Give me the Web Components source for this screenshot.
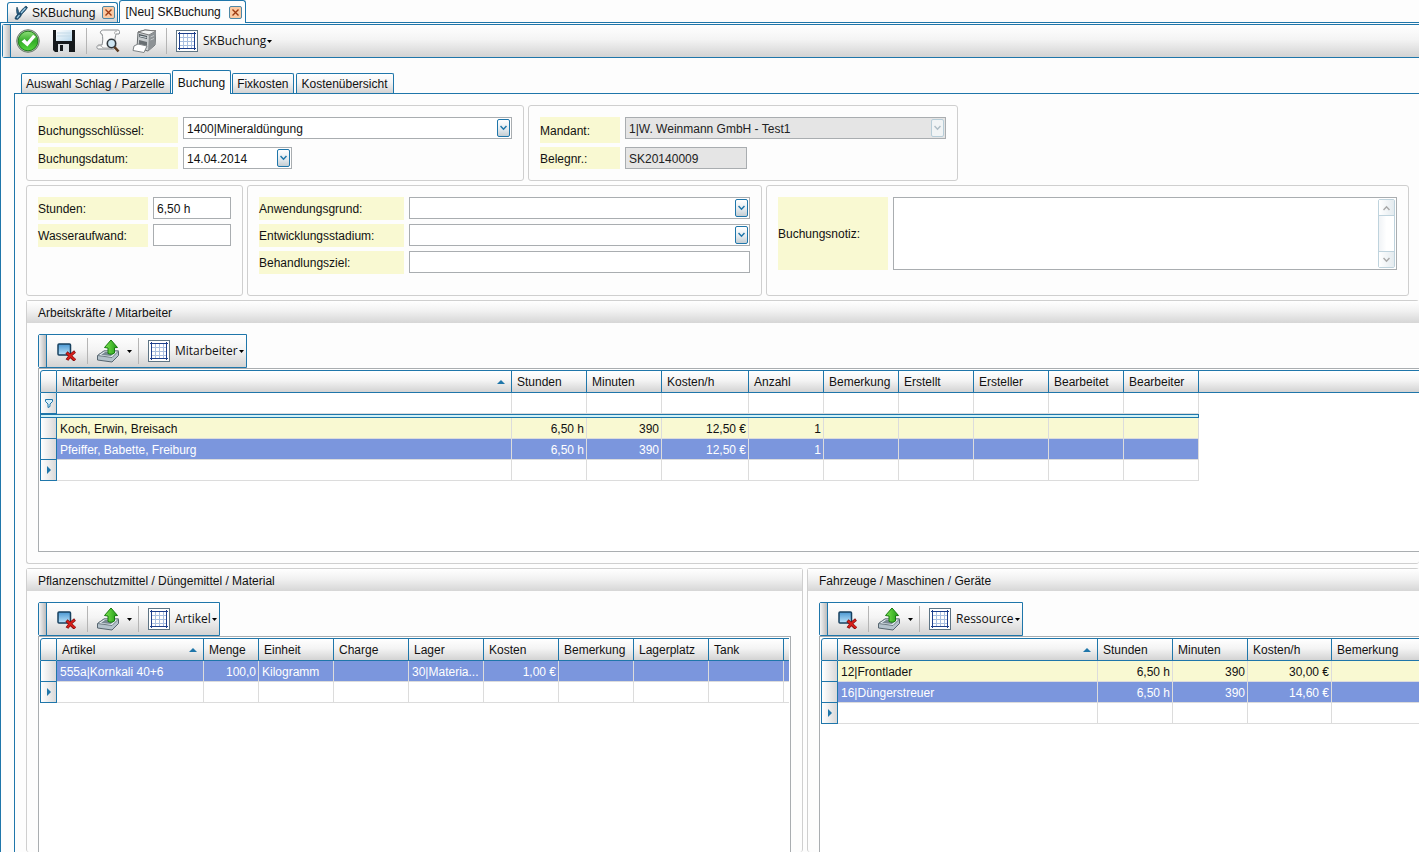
<!DOCTYPE html>
<html lang="de">
<head>
<meta charset="utf-8">
<title>SKBuchung</title>
<style>
:root {
  --line: #1f76aa;
  --soft: #cfcfcf;
  --frame: #a9adb0;
  --label: #f9f9d2;
  --select: #7b96dd;
  --page: #fdfdfd;
  --shade: linear-gradient(#ffffff, #f4f4f4 45%, #d3d3d3);
}
html { height: 100%; overflow: hidden; }
body {
  margin: 0; height: 100%;
  background: var(--page); color: #111;
  font: 12px/16px "Liberation Sans", Arial, sans-serif;
}
</style>
</head>
<body>
<booking-app></booking-app>
<script>
const ICONS = {
  ok: `<svg width="24" height="24" viewBox="0 0 24 24"><defs><linearGradient id="a" x2="0" y2="1"><stop stop-color="#8fe07a"/><stop offset=".5" stop-color="#33ab28"/><stop offset="1" stop-color="#55d83c"/></linearGradient></defs><circle cx="12" cy="12" r="11.3" fill="#a9b8a9" stroke="#6f7f70"/><circle cx="12" cy="12" r="9.8" fill="url(#a)" stroke="#23801d"/><path d="M5.500 12.500l3-2.600 2.600 2.900 6-7 2.600 2-8.300 9.700z" fill="#fff"/></svg>`,
  save: `<svg width="24" height="24" viewBox="0 0 24 24"><defs><linearGradient id="a" x2="1" y2="1"><stop stop-color="#fff"/><stop offset="1" stop-color="#b9d8ec"/></linearGradient></defs><path d="M1 1h22v22H3l-2-2z" fill="#15191c"/><path d="M4 1h16v11H4z" fill="url(#a)"/><path d="M5 4h14M5 7h14" stroke="#c5dbe8"/><path d="M6 15h11v8H6z" fill="#d9dee1"/><path d="M8 16h3v6H8z" fill="#15191c"/></svg>`,
  preview: `<svg width="24" height="24" viewBox="0 0 24 24"><path d="M5 2c1-1 2-1 3-1h14c2 0 2 3 1 4h-3c-1 4-2 8 0 12l-2 3H2c-2-1-1-4 1-4h3C7 12 7 8 6 5 4 5 4 3 5 2z" fill="#fafafa" stroke="#888c8f"/><path d="M19 5c-1-2 0-3 2-3M2 17c2-1 4 0 5 2h7" fill="none" stroke="#aaa"/><circle cx="15.500" cy="14.500" r="4.200" fill="#cfe6f3" stroke="#30373c" stroke-width="1.600"/><path d="M18.500 18l4 4.500" stroke="#5a3a20" stroke-width="2.600"/></svg>`,
  print: `<svg width="24" height="24" viewBox="0 0 24 24"><path d="M6 3l7-2 11 1-1 14-7 6-11-3z" fill="#c9cdcf" stroke="#666b6e"/><path d="M6 3l7-2 11 1-7 4z" fill="#f3f4f4" stroke="#777"/><path d="M17 6l7-4-1 14-7 6z" fill="#8d9295"/><path d="M7 5l8 2v3L7 8z" fill="#4b5358"/><path d="M7.500 7l7 1.500" stroke="#dde6ea"/><path d="M7 11l8 2v4l-8-2z" fill="#696f73"/><path d="M2 17l4-2 9 2-3 6.500-11-2z" fill="#fff" stroke="#7e8386"/><path d="M18.500 8l3.500-1.500M18.500 11l3.500-1.500" stroke="#c4c8ca"/></svg>`,
  grid: `<svg width="22" height="22" viewBox="0 0 22 22" shape-rendering="crispEdges"><path d="M.5.500h21v21H.5z" fill="#fff" stroke="#5d7484"/><path d="M7.500 3v16M11.500 3v16M15.500 3v16M3 7.500h16M3 11.500h16M3 15.500h16" stroke="#a9bfe0"/><path d="M3.500 2v18M18.500 2v18M2 3.500h18M2 18.500h18" stroke="#1d3f8c"/></svg>`,
  remove: `<svg width="20" height="20" viewBox="0 0 20 20"><defs><linearGradient id="a" x2="0" y2="1"><stop stop-color="#4a97d2"/><stop offset="1" stop-color="#bde4fa"/></linearGradient></defs><rect x="1" y="3" width="12.500" height="11" rx="1" fill="url(#a)" stroke="#17405f" stroke-width="1.500"/><path d="M9.500 11.500l8.500 8M18 10.500c-3 2-6 5-8 8.500" stroke="#7d0d0d" stroke-width="3.200"/><path d="M10 12l8 7M17.500 11c-3 2-5.500 4.500-7 7.500" stroke="#d8201b" stroke-width="2"/></svg>`,
  export: `<svg width="22" height="24" viewBox="0 0 22 24"><defs><linearGradient id="a" x2="1" y2="0"><stop stop-color="#7fe84f"/><stop offset="1" stop-color="#1f9a16"/></linearGradient></defs><path d="M.5 16.500L7 12h14.500v4.500l-6.500 6.500L.5 21z" fill="#b5c3cc" stroke="#56656f"/><path d="M.5 16.500L7 12h14.500L15 18.500z" fill="#e9f0f4" stroke="#6c7a83"/><path d="M4 16l4-3h10l-4 4z" fill="#788892"/><path d="M14 1L20.500 8.500l-3 .2v5.300c-2 1.500-4 1.500-6.500.5V9L7.500 8.500z" fill="url(#a)" stroke="#16780f"/></svg>`,
  pliers: `<svg width="16" height="16" viewBox="0 0 16 16"><path d="M4 2c1 2 1.500 4 2 6l1.500 1.500L5 11C3.500 8 3 5 4 2z" fill="#2a6288" stroke="#143a54" stroke-width=".6"/><path d="M13 1l1.500 1.500C13 5 11 7 9 9c-1 2-2 4-4.500 5.500L2 14c0-2 1.500-4 4-5.500C8 6 10 3 13 1z" fill="#1d5074" stroke="#143a54" stroke-width=".6"/><path d="M12.500 3L8 8M4 13l2.500-3" stroke="#9fcbe2" stroke-width="1.200"/></svg>`,
  caret: `<svg width="5" height="3" viewBox="0 0 5 3"><path d="M0 0h5L2.500 3z" fill="#000"/></svg>`,
  down: `<svg width="7" height="6" viewBox="0 0 7 6"><path d="M.5 1l3 3.200 3-3.200" fill="none" stroke="currentColor" stroke-width="1.500"/></svg>`,
  up: `<svg width="7" height="6" viewBox="0 0 7 6"><path d="M.5 5l3-3.200 3 3.200" fill="none" stroke="currentColor" stroke-width="1.500"/></svg>`,
  sort: `<svg width="8" height="4" viewBox="0 0 8 4"><path d="M0 4h8L4 0z" fill="#1f76aa"/></svg>`,
  play: `<svg width="4" height="8" viewBox="0 0 4 8"><path d="M0 0v8l4-4z" fill="#1f76aa"/></svg>`,
  filter: `<svg width="8" height="9" viewBox="0 0 8 9"><path d="M.5.500h7v2L5 5v2.500L3 8.500V5L.5 2.500z" fill="#d7effa" stroke="#1f76aa"/></svg>`,
  close: `<svg width="7" height="7" viewBox="0 0 7 7"><path d="M.5.500l6 6M6.500.500l-6 6" stroke="#9c3a12" stroke-width="1.400"/></svg>`
};

const RESET = `
  *, *::before { box-sizing: border-box; }
  button, input, select, textarea { font: inherit; color: inherit; margin: 0; padding: 0; border: 0; background: none; border-radius: 0; outline: 0; }
  svg { display: block; flex: none; }`;

class Base extends HTMLElement {
  constructor() { super(); this.attachShadow({ mode: "open" }); }
  connectedCallback() { this.shadowRoot.innerHTML = `<style>${RESET}${this.css()}</style>${this.html()}`; }
  at(name, fallback = "") { return this.getAttribute(name) ?? fallback; }
}

/* Tab of an open document, with its own close button */
customElements.define("doc-tab", class extends Base {
  css() { return `
    :host { display: flex; align-items: center; height: 20px; padding: 0 2px 0 5px; gap: 7px;
      border: 1px solid var(--line); border-bottom: 0; border-radius: 3px 3px 0 0; background: var(--shade); }
    :host([active]) { height: 23px; padding: 0 3px 0 5px; gap: 8px; background: var(--page); }
    .name { display: flex; align-items: center; gap: 3px; white-space: nowrap; }
    .close { width: 13px; height: 13px; display: grid; place-items: center; border: 1px solid #4e87a6; border-radius: 2px; background: #fbc9a2; }`; }
  html() { return `<button class="name">${this.hasAttribute("icon") ? ICONS[this.at("icon")] : ""}<slot></slot></button>
    <button class="close" aria-label="Schließen">${ICONS.close}</button>`; }
});

customElements.define("tool-bar", class extends Base {
  css() { return `
    :host { display: flex; height: 34px; border: 1px solid var(--line); border-radius: 2px 0 0 2px; background: var(--shade); }
    :host([wide]) { border-right: 0; border-radius: 3px 0 0 3px; }
    .grip { width: 8px; border-right: 1px solid var(--line); background: linear-gradient(90deg, #f4f4f4, #bcbcbc); }
    .items { display: flex; align-items: center; padding: 0 2px 0 10px; }
    :host([wide]) .items { padding-left: 5px; }`; }
  html() { return `<div class="grip"></div><div class="items"><slot></slot></div>`; }
});

customElements.define("tool-button", class extends Base {
  css() { return `:host { display: block; }
    button { display: flex; align-items: center; gap: 8px; }
    button.text { gap: 1px; font: 12px/16px "Open Sans", "Noto Sans", sans-serif; white-space: nowrap; }
    .label { padding-left: 4px; }`; }
  html() {
    const label = this.at("label");
    return `<button class="${label ? "text" : ""}" aria-label="${this.at("hint", label)}">${ICONS[this.at("icon")]}${label ? `<span class="label">${label}</span>` : ""}${this.hasAttribute("menu") ? ICONS.caret : ""}</button>`;
  }
});

customElements.define("tool-separator", class extends Base {
  css() { return `:host { display: block; width: 1px; height: 26px; margin: 0 9px 0 10px; background: #b5b5b5; }
    :host([tight]) { margin-left: 6px; }`; }
  html() { return ""; }
});

customElements.define("page-tab", class extends Base {
  css() { return `
    :host { display: block; height: 20px; padding: 0 5px 0 4px; border: 1px solid var(--line); border-bottom: 0; border-radius: 2px 2px 0 0; background: var(--shade); }
    :host([active]) { height: 24px; margin: 0 0 -1px; padding: 0 5px; background: var(--page); }
    button { height: 100%; white-space: nowrap; display: flex; align-items: center; padding-top: 1px; }`; }
  html() { return `<button><slot></slot></button>`; }
});

customElements.define("group-panel", class extends Base {
  css() { return `
    :host { display: flex; flex-direction: column; border: 1px solid var(--soft); border-radius: 3px; min-width: 0; }
    :host([open]) { border-right: 0; }
    :host([foot]) { border-bottom: 0; }
    h2 { margin: 0; height: 22px; padding-left: 11px; font: inherit; line-height: 24px; background: linear-gradient(#fff, #f1f1f1 45%, #d6d6d6); }
    .body { flex: 1; display: flex; flex-direction: column; padding: 11px; min-height: 0; }
    :host([open]) .body { padding-right: 0; }
    :host([foot]) .body { padding-bottom: 0; }`; }
  html() { return `${this.hasAttribute("heading") ? `<h2>${this.at("heading")}</h2>` : ""}<div class="body"><slot></slot></div>`; }
});

/* Label and control: kind is text, select, date or memo */
customElements.define("form-field", class extends Base {
  css() { return `
    :host { display: grid; grid-template-columns: var(--label-width) 1fr; column-gap: 5px; align-items: start; margin-bottom: 4px; }
    :host(:last-child) { margin-bottom: 0; }
    :host([short]) { grid-template-columns: var(--label-width) var(--short-width); }
    label { min-height: var(--label-height, 23px); display: flex; align-items: center; padding-top: 1px; background: var(--label); }
    .box { display: flex; height: 22px; border: 1px solid var(--frame); background: #fff; position: relative; }
    :host([off]) .box { background: #e5e5e5; color: #222; }
    input, select { flex: 1; min-width: 0; width: 0; padding: 1px 3px 0; }
    select { appearance: none; opacity: 1; color: inherit; }
    input:disabled { color: inherit; }
    .drop { position: absolute; right: 1px; top: 1px; width: 13px; height: 18px; display: grid; place-items: center;
      border: 1px solid var(--line); border-radius: 2px; color: var(--line); background: linear-gradient(#fff, #e6ecf0 55%, #c3cdd3); pointer-events: none; }
    :host([off]) .drop { color: #b0bec6; border-color: #b7cdd8; background: #f1f4f5; }
    .box.memo { height: 73px; padding: 1px; }
    textarea { flex: 1; resize: none; min-width: 0; }
    .scroll { width: 17px; display: flex; flex-direction: column; justify-content: space-between; border: 1px solid #bfd3dd; border-radius: 2px; color: #a9a9a9; background: linear-gradient(90deg, #f0f3f6, #fff 50%); }
    .scroll button { height: 16px; display: grid; place-items: center; border-bottom: 1px solid #bfd3dd; background: linear-gradient(90deg, #fff, #e4ebef); }
    .scroll button:last-child { border-top: 1px solid #bfd3dd; border-bottom: 0; }`; }
  html() {
    const kind = this.at("kind", "text"), value = this.at("value"), off = this.hasAttribute("off") ? "disabled" : "";
    const drop = `<span class="drop">${ICONS.down}</span>`;
    const control = {
      text: `<input id="c" value="${value}" ${off}>`,
      date: `<input id="c" value="${value}">${drop}`,
      select: `<select id="c" ${off}><option>${value}</option></select>${drop}`,
      memo: `<textarea id="c"></textarea><div class="scroll"><button aria-label="Nach oben">${ICONS.up}</button><button aria-label="Nach unten">${ICONS.down}</button></div>`
    }[kind];
    return `<label for="c">${this.at("label")}</label><div class="box ${kind}">${control}</div>`;
  }
});

const GRIDS = {
  staff: {
    filter: true,
    cols: [["Mitarbeiter", 455], ["Stunden", 75, 1], ["Minuten", 75, 1], ["Kosten/h", 87, 1], ["Anzahl", 75, 1], ["Bemerkung", 75], ["Erstellt", 75], ["Ersteller", 75], ["Bearbeitet", 75], ["Bearbeiter", 75]],
    rows: [["Koch, Erwin, Breisach", "6,50 h", "390", "12,50 €", "1"], ["Pfeiffer, Babette, Freiburg", "6,50 h", "390", "12,50 €", "1"]],
    rest: true
  },
  material: {
    cols: [["Artikel", 147], ["Menge", 55, 1], ["Einheit", 75], ["Charge", 75], ["Lager", 75], ["Kosten", 75, 1], ["Bemerkung", 75], ["Lagerplatz", 75], ["Tank", 75], ["", 75]],
    rows: [["555a|Kornkali 40+6", "100,0", "Kilogramm", "", "30|Materia...", "1,00 €"]]
  },
  machines: {
    cols: [["Ressource", 260], ["Stunden", 75, 1], ["Minuten", 75, 1], ["Kosten/h", 84, 1], ["Bemerkung", 150]],
    rows: [["12|Frontlader", "6,50 h", "390", "30,00 €"], ["16|Düngerstreuer", "6,50 h", "390", "14,60 €"]]
  }
};

customElements.define("data-grid", class extends Base {
  css() { return `
    :host { display: block; flex: 1; border: 1px solid var(--frame); padding: 1px; background: #fff; min-width: 0; }
    :host([open]) { border-right: 0; padding-right: 0; }
    :host([foot]) { border-bottom: 0; }
    .clip { overflow: hidden; }
    table { table-layout: fixed; border-collapse: separate; border-spacing: 0; width: 100%; }
    th, td { padding: 0; height: 21px; font-weight: normal; white-space: nowrap; overflow: hidden; }
    thead th { height: 23px; text-align: left; padding-left: 5px; background: var(--shade); border: solid var(--line); border-width: 1px 1px 1px 0; }
    thead th:first-child { border-left-width: 1px; border-radius: 3px 0 0 0; }
    thead th.rest { border-right: 0; }
    thead div { display: flex; align-items: center; justify-content: space-between; padding-right: 6px; }
    tbody th { border: 1px solid var(--line); border-top: 0; background: linear-gradient(90deg, #fff, #d9d9d9); }
    tbody th svg { margin: 0 auto; }
    td { padding: 1px 2px 0 3px; border: solid #dcdcdc; border-width: 0 1px 1px 0; }
    td.rest { border: 0; background: none !important; }
    td.num { text-align: right; }
    tr.odd td { background: var(--label); }
    tr.chosen td { background: var(--select); color: #fff; }
    tr.split td { height: 4px; padding: 0; border: 1px solid var(--line); background: #d2f3f7; }
    tr.split td.rest { border: 0; }`; }
  html() {
    const { cols, rows, filter, rest } = GRIDS[this.at("data")];
    const tail = rest ? `<td class="rest"></td>` : "";
    const line = (cells, cls, mark = "") => `<tr class="${cls}"><th>${mark}</th>${cols.map((c, i) => `<td class="${c[2] ? "num" : ""}">${cells[i] ?? ""}</td>`).join("")}${tail}</tr>`;
    const total = cols.reduce((sum, c) => sum + c[1], 17);
    return `<div class="clip"><table style="${rest ? "" : `width:${total}px`}">
      <colgroup><col style="width:17px">${cols.map(c => `<col style="width:${c[1]}px">`).join("")}${rest ? "<col>" : ""}</colgroup>
      <thead><tr><th></th>${cols.map((c, i) => `<th scope="col">${i ? c[0] : `<div>${c[0]}${ICONS.sort}</div>`}</th>`).join("")}${rest ? `<th class="rest"></th>` : ""}</tr></thead>
      <tbody>${filter ? line([], "", ICONS.filter) + `<tr class="split"><td colspan="${cols.length + 1}"></td>${tail}</tr>` : ""}
      ${rows.map((r, i) => line(r, i === rows.length - 1 ? "chosen" : "odd")).join("")}
      ${line([], "", ICONS.play)}</tbody></table></div>`;
  }
});

/* Grid together with the toolbar above it */
customElements.define("grid-section", class extends Base {
  css() { return `:host { display: flex; flex-direction: column; align-items: flex-start; flex: 1; min-width: 0; }
    data-grid { align-self: stretch; }`; }
  html() {
    const flags = ["open", "foot"].filter(f => this.hasAttribute(f)).join(" ");
    return `<tool-bar><tool-button icon="remove" hint="Zeile löschen"></tool-button><tool-separator></tool-separator>
      <tool-button icon="export" hint="Exportieren" menu></tool-button><tool-separator tight></tool-separator>
      <tool-button icon="grid" label="${this.at("name")}" menu></tool-button></tool-bar>
      <data-grid data="${this.at("data")}" ${flags}></data-grid>`;
  }
});

customElements.define("booking-app", class extends Base {
  css() { return `
    :host { display: flex; flex-direction: column; min-height: 100vh; }
    .docs { display: flex; align-items: flex-end; gap: 1px; padding-left: 7px; height: 22px; }
    doc-tab { position: relative; }
    doc-tab[active] { margin-bottom: -1px; }
    .window { flex: 1; display: flex; flex-direction: column; border: solid var(--line); border-width: 1px 0 0 1px; padding: 1px 0 0 1px; }
    .gap { width: 12px; }
    .pages { display: flex; align-items: flex-end; gap: 2px; padding: 0 0 0 19px; margin-top: 12px; height: 23px; }
    page-tab[active] { position: relative; margin-inline: -1px; }
    .page { flex: 1; display: flex; flex-direction: column; gap: 4px; margin-left: 12px; padding: 11px 0 0 11px; border: solid var(--line); border-width: 1px 0 0 1px; }
    .row { display: grid; gap: 4px; }
    .keys { grid-template-columns: 498px 430px; }
    .usage { grid-template-columns: 217px 515px 1fr; padding-right: 10px; height: 111px; }
    .lower { flex: 1; grid-template-columns: 777fr 612fr; }
    .staff { height: 264px; }
    .a { --label-width: 140px; --short-width: 109px; }
    .b { --label-width: 80px; --short-width: 122px; }
    .c, .e { --label-width: 110px; }
    .d { --label-width: 145px; }
    .tall { --label-height: 26px; }
    .line { --label-height: 22px; }
    .e form-field { --label-height: 73px; }`; }
  html() { return `
    <div class="docs"><doc-tab icon="pliers">SKBuchung</doc-tab><doc-tab active>[Neu] SKBuchung</doc-tab></div>
    <div class="window">
      <tool-bar wide>
        <tool-button icon="ok" hint="Übernehmen"></tool-button><div class="gap"></div>
        <tool-button icon="save" hint="Speichern"></tool-button><tool-separator></tool-separator>
        <tool-button icon="preview" hint="Vorschau"></tool-button><div class="gap"></div>
        <tool-button icon="print" hint="Drucken"></tool-button><tool-separator></tool-separator>
        <tool-button icon="grid" label="SKBuchung" menu></tool-button>
      </tool-bar>
      <div class="pages"><page-tab>Auswahl Schlag / Parzelle</page-tab><page-tab active>Buchung</page-tab><page-tab>Fixkosten</page-tab><page-tab>Kostenübersicht</page-tab></div>
      <main class="page">
        <div class="row keys">
          <group-panel class="a">
            <form-field class="tall" kind="select" label="Buchungsschlüssel:" value="1400|Mineraldüngung"></form-field>
            <form-field class="line" short kind="date" label="Buchungsdatum:" value="14.04.2014"></form-field>
          </group-panel>
          <group-panel class="b">
            <form-field class="tall" off kind="select" label="Mandant:" value="1|W. Weinmann GmbH - Test1"></form-field>
            <form-field class="line" short off label="Belegnr.:" value="SK20140009"></form-field>
          </group-panel>
        </div>
        <div class="row usage">
          <group-panel class="c">
            <form-field label="Stunden:" value="6,50 h"></form-field>
            <form-field label="Wasseraufwand:"></form-field>
          </group-panel>
          <group-panel class="d">
            <form-field kind="select" label="Anwendungsgrund:"></form-field>
            <form-field kind="select" label="Entwicklungsstadium:"></form-field>
            <form-field label="Behandlungsziel:"></form-field>
          </group-panel>
          <group-panel class="e"><form-field kind="memo" label="Buchungsnotiz:"></form-field></group-panel>
        </div>
        <group-panel class="staff" open heading="Arbeitskräfte / Mitarbeiter"><grid-section name="Mitarbeiter" data="staff" open></grid-section></group-panel>
        <div class="row lower">
          <group-panel foot heading="Pflanzenschutzmittel / Düngemittel / Material"><grid-section name="Artikel" data="material" foot></grid-section></group-panel>
          <group-panel open foot heading="Fahrzeuge / Maschinen / Geräte"><grid-section name="Ressource" data="machines" open foot></grid-section></group-panel>
        </div>
      </main>
    </div>`; }
});
</script>
</body>
</html>
